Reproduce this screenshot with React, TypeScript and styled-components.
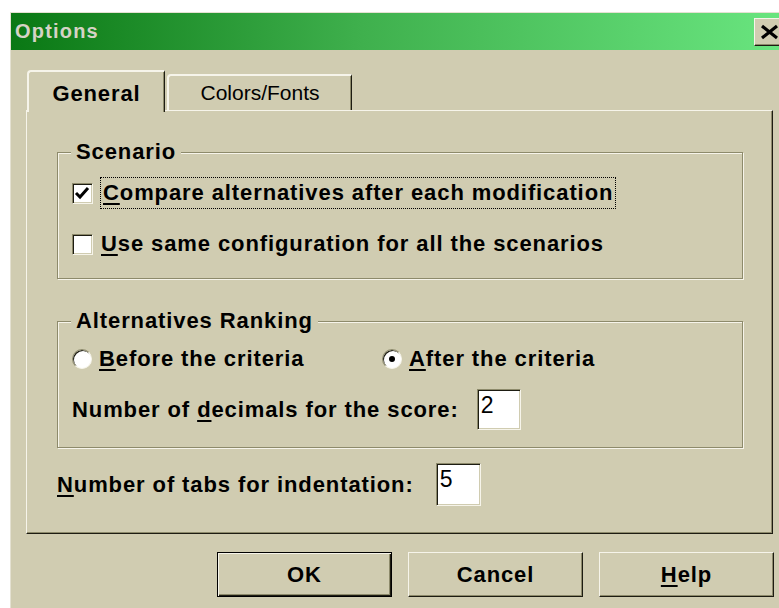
import React from 'react';
import styled, { createGlobalStyle, css } from 'styled-components';

const face = '#d0ccb1';
const hilite = '#f6f4ea';
const shadow = '#8d8a6b';
const dark = '#1d1c12';

const GlobalStyle = createGlobalStyle`
  html, body {
    margin: 0;
    padding: 0;
    background: #fff;
    overflow: hidden;
  }
  body {
    font-family: "Liberation Sans", Arial, sans-serif;
    color: #000;
  }
`;

const Window = styled.div`
  margin: 12px 0 0 10px;
  width: 780px;
  height: 596px;
  box-sizing: border-box;
  border-top: 1px solid #e4e1d2;
  border-left: 1px solid #e4e1d2;
  background: ${face};
  display: flex;
  flex-direction: column;
`;

const TitleBar = styled.div`
  height: 37px;
  flex: none;
  display: flex;
  align-items: center;
  padding: 0 4px;
  background: linear-gradient(to right, #0a7814 0%, #3fb04d 45%, #6ae680 100%);
`;

const Title = styled.span`
  font: bold 20px "Liberation Sans", Arial, sans-serif;
  letter-spacing: 1.2px;
  color: #d6d3c6;
`;

const CloseButton = styled.button`
  margin-left: auto;
  width: 32px;
  height: 28px;
  padding: 0;
  box-sizing: border-box;
  background: ${face};
  border: 1px solid;
  border-color: ${hilite} ${dark} ${dark} ${hilite};
  box-shadow: inset -1px -1px 0 ${shadow};
  display: flex;
  align-items: flex-start;
  justify-content: flex-start;
`;

const Body = styled.div`
  flex: 1;
  display: flex;
  flex-direction: column;
  padding: 20px 16px 0 15px;
`;

const TabStrip = styled.div`
  display: flex;
  align-items: flex-end;
  gap: 2px;
  height: 42px;
  padding-left: 1px;
  margin-bottom: -2px;
  position: relative;
  z-index: 1;
`;

const Tab = styled.div<{ $active?: boolean; $width: number }>`
  width: ${p => p.$width}px;
  height: ${p => (p.$active ? 42 : 36)}px;
  margin-bottom: ${p => (p.$active ? 0 : 2)}px;
  padding-top: ${p => (p.$active ? 9 : 5)}px;
  box-sizing: border-box;
  text-align: center;
  line-height: 24px;
  background: ${face};
  border-top: 2px solid ${hilite};
  border-left: 2px solid ${hilite};
  border-right: 1px solid ${dark};
  border-top-left-radius: 4px;
  box-shadow: inset -1px 0 0 ${shadow};
  ${p =>
    p.$active
      ? css`
          font: bold 22px "Liberation Sans", Arial, sans-serif;
          letter-spacing: 0.9px;
        `
      : css`
          font: 21px "Liberation Sans", Arial, sans-serif;
        `}
`;

const Panel = styled.div`
  width: 747px;
  height: 424px;
  box-sizing: border-box;
  border-top: 1px solid ${hilite};
  border-left: 1px solid ${hilite};
  border-right: 1px solid ${dark};
  border-bottom: 1px solid ${dark};
  box-shadow: inset -1px -1px 0 ${shadow};
  padding: 0 30px;
  display: flex;
  flex-direction: column;
`;

const Group = styled.div<{ $top: number; $padTop: number; $padBottom: number; $gap: number }>`
  position: relative;
  margin-top: ${p => p.$top}px;
  width: 686px;
  box-sizing: border-box;
  border: 1px solid ${shadow};
  box-shadow: inset 1px 1px 0 ${hilite}, 1px 1px 0 ${hilite};
  padding: ${p => p.$padTop}px 14px ${p => p.$padBottom}px;
  display: flex;
  flex-direction: column;
  gap: ${p => p.$gap}px;
`;

const Legend = styled.span`
  position: absolute;
  top: -13px;
  left: 13px;
  padding: 0 5px;
  background: ${face};
`;

const Text = styled.span`
  font: bold 22px "Liberation Sans", Arial, sans-serif;
  letter-spacing: 0.9px;
  line-height: 24px;
  white-space: nowrap;
`;

const Key = styled.span`
  text-decoration: underline;
  text-decoration-thickness: 2px;
  text-underline-offset: 3px;
`;

const Row = styled.div<{ $height: number; $gap: number }>`
  height: ${p => p.$height}px;
  display: flex;
  align-items: center;
  gap: ${p => p.$gap}px;
`;

const Option = styled.label<{ $width?: number }>`
  display: flex;
  align-items: center;
  gap: 7px;
  ${p => p.$width && css`width: ${p.$width}px;`}
`;

const Focus = styled.span`
  border: 1px dotted #000;
  height: 30px;
  display: flex;
  align-items: center;
  padding: 0 2px;
`;

const CheckBox = styled.span`
  width: 21px;
  height: 21px;
  flex: none;
  box-sizing: border-box;
  background: #fff;
  border: 1px solid;
  border-color: ${shadow} ${hilite} ${hilite} ${shadow};
  box-shadow: inset 1px 1px 0 ${dark}, inset -1px -1px 0 ${face};
  display: flex;
`;

const Radio = styled.span`
  width: 20px;
  height: 20px;
  flex: none;
  box-sizing: border-box;
  border-radius: 50%;
  background: #fff;
  border: 1px solid;
  border-color: ${shadow} ${hilite} ${hilite} ${shadow};
  box-shadow: inset 1px 1px 0 ${dark};
  display: flex;
  align-items: center;
  justify-content: center;
`;

const Dot = styled.span`
  width: 6px;
  height: 6px;
  border-radius: 50%;
  background: #000;
`;

const Field = styled.div<{ $width: number; $height: number }>`
  width: ${p => p.$width}px;
  height: ${p => p.$height}px;
  box-sizing: border-box;
  background: #fff;
  border: 1px solid;
  border-color: ${shadow} ${hilite} ${hilite} ${shadow};
  box-shadow: inset 1px 1px 0 ${dark}, inset -1px -1px 0 ${face};
  padding: 2px 0 0 3px;
  font: 23px "Liberation Sans", Arial, sans-serif;
  line-height: 26px;
`;

const ButtonRow = styled.div`
  display: flex;
  gap: 16px;
  margin-top: 18px;
  padding-left: 191px;
`;

const Button = styled.button<{ $default?: boolean }>`
  width: 176px;
  height: 45px;
  padding: 0;
  box-sizing: border-box;
  background: ${face};
  color: #000;
  font: bold 22px "Liberation Sans", Arial, sans-serif;
  letter-spacing: 0.9px;
  ${p =>
    p.$default
      ? css`
          border: 1px solid #000;
          box-shadow: inset 1px 1px 0 ${hilite}, inset -1px -1px 0 ${dark}, inset -2px -2px 0 ${shadow};
        `
      : css`
          border: 1px solid;
          border-color: ${hilite} ${dark} ${dark} ${hilite};
          box-shadow: inset -1px -1px 0 ${shadow};
        `}
`;

const CheckMark = () => (
  <svg width="19" height="19" viewBox="0 0 19 19">
    <polyline points="3,9 7,13 15,4" fill="none" stroke="#000" strokeWidth="3" />
  </svg>
);

const CloseGlyph = () => (
  <svg width="30" height="26" viewBox="0 0 30 26">
    <path d="M7 7 L22 19 M22 7 L7 19" stroke="#000" strokeWidth="3.2" />
  </svg>
);

const tabs = [
  { label: 'General', width: 138 },
  { label: 'Colors/Fonts', width: 185 },
];

export default function App() {
  return (
    <>
      <GlobalStyle />
      <Window>
        <TitleBar>
          <Title>Options</Title>
          <CloseButton aria-label="Close">
            <CloseGlyph />
          </CloseButton>
        </TitleBar>
        <Body>
          <TabStrip>
            {tabs.map((t, i) => (
              <Tab key={t.label} $active={i === 0} $width={t.width}>
                {t.label}
              </Tab>
            ))}
          </TabStrip>
          <Panel>
            <Group $top={41} $padTop={24} $padBottom={18} $gap={19}>
              <Legend>
                <Text>Scenario</Text>
              </Legend>
              <Row $height={32} $gap={0}>
                <Option>
                  <CheckBox>
                    <CheckMark />
                  </CheckBox>
                  <Focus>
                    <Text>
                      <Key>C</Key>ompare alternatives after each modification
                    </Text>
                  </Focus>
                </Option>
              </Row>
              <Row $height={32} $gap={0}>
                <Option>
                  <CheckBox />
                  <Text style={{ marginLeft: 1 }}>
                    <Key>U</Key>se same configuration for all the scenarios
                  </Text>
                </Option>
              </Row>
            </Group>

            <Group $top={42} $padTop={21} $padBottom={17} $gap={14}>
              <Legend>
                <Text>Alternatives Ranking</Text>
              </Legend>
              <Row $height={32} $gap={0}>
                <Option $width={310}>
                  <Radio />
                  <Text>
                    <Key>B</Key>efore the criteria
                  </Text>
                </Option>
                <Option>
                  <Radio>
                    <Dot />
                  </Radio>
                  <Text>
                    <Key>A</Key>fter the criteria
                  </Text>
                </Option>
              </Row>
              <Row $height={41} $gap={18}>
                <Text>
                  Number of <Key>d</Key>ecimals for the score:
                </Text>
                <Field $width={44} $height={41}>2</Field>
              </Row>
            </Group>

            <Row $height={43} $gap={22} style={{ marginTop: 15 }}>
              <Text>
                <Key>N</Key>umber of tabs for indentation:
              </Text>
              <Field $width={45} $height={43}>5</Field>
            </Row>
          </Panel>
          <ButtonRow>
            <Button $default>OK</Button>
            <Button>Cancel</Button>
            <Button>
              <Key>H</Key>elp
            </Button>
          </ButtonRow>
        </Body>
      </Window>
    </>
  );
}
